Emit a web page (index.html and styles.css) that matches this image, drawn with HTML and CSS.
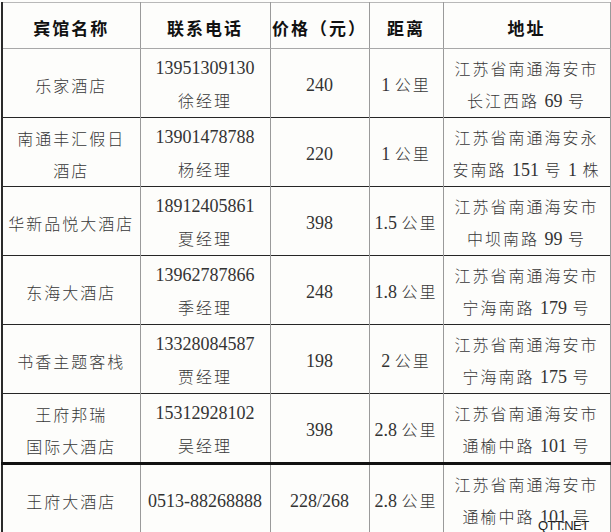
FILE: index.html
```html
<!DOCTYPE html>
<html lang="zh">
<head>
<meta charset="utf-8">
<title>宾馆信息</title>
<link rel="stylesheet" href="styles.css">
</head>
<body>
<div class="page">
<table class="hotels">
  <colgroup>
    <col class="c-name"><col class="c-phone"><col class="c-price"><col class="c-dist"><col class="c-addr">
  </colgroup>
  <thead>
    <tr>
      <th>宾馆名称</th>
      <th>联系电话</th>
      <th>价格（元）</th>
      <th>距离</th>
      <th>地址</th>
    </tr>
  </thead>
  <tbody>
    <tr>
      <td class="cn">乐家酒店</td>
      <td><span class="num">13951309130</span><br><span class="cn">徐经理</span></td>
      <td class="num">240</td>
      <td><span class="num">1</span> <span class="cn">公里</span></td>
      <td class="cn">江苏省南通海安市<br>长江西路 <span class="num">69</span> 号</td>
    </tr>
    <tr>
      <td class="cn">南通丰汇假日<br>酒店</td>
      <td><span class="num">13901478788</span><br><span class="cn">杨经理</span></td>
      <td class="num">220</td>
      <td><span class="num">1</span> <span class="cn">公里</span></td>
      <td class="cn">江苏省南通海安永<br>安南路 <span class="num">151</span> 号 <span class="num">1</span> 株</td>
    </tr>
    <tr>
      <td class="cn">华新品悦大酒店</td>
      <td><span class="num">18912405861</span><br><span class="cn">夏经理</span></td>
      <td class="num">398</td>
      <td><span class="num">1.5</span> <span class="cn">公里</span></td>
      <td class="cn">江苏省南通海安市<br>中坝南路 <span class="num">99</span> 号</td>
    </tr>
    <tr>
      <td class="cn">东海大酒店</td>
      <td><span class="num">13962787866</span><br><span class="cn">季经理</span></td>
      <td class="num">248</td>
      <td><span class="num">1.8</span> <span class="cn">公里</span></td>
      <td class="cn">江苏省南通海安市<br>宁海南路 <span class="num">179</span> 号</td>
    </tr>
    <tr>
      <td class="cn">书香主题客栈</td>
      <td><span class="num">13328084587</span><br><span class="cn">贾经理</span></td>
      <td class="num">198</td>
      <td><span class="num">2</span> <span class="cn">公里</span></td>
      <td class="cn">江苏省南通海安市<br>宁海南路 <span class="num">175</span> 号</td>
    </tr>
    <tr class="sep">
      <td class="cn">王府邦瑞<br>国际大酒店</td>
      <td><span class="num">15312928102</span><br><span class="cn">吴经理</span></td>
      <td class="num">398</td>
      <td><span class="num">2.8</span> <span class="cn">公里</span></td>
      <td class="cn">江苏省南通海安市<br>通榆中路 <span class="num">101</span> 号</td>
    </tr>
    <tr class="last">
      <td class="cn">王府大酒店</td>
      <td class="num">0513-88268888</td>
      <td class="num">228/268</td>
      <td><span class="num">2.8</span> <span class="cn">公里</span></td>
      <td class="cn">江苏省南通海安市<br>通榆中路 <span class="num">101</span> 号</td>
    </tr>
  </tbody>
</table>
<div class="watermark">QTT.NET</div>
</div>
</body>
</html>
```
FILE: styles.css
```css
html, body {
  margin: 0;
  padding: 0;
  background: #fdfdfb;
}
.page {
  position: relative;
  width: 611px;
  height: 532px;
  overflow: hidden;
  padding-top: 2px;
  padding-left: 1px;
  box-sizing: border-box;
}
.hotels {
  border-collapse: collapse;
  table-layout: fixed;
  width: 608px;
  color: #3a3a3a;
  font-family: "Liberation Serif", "Noto Sans CJK SC", serif;
  border-top: 1px solid #b8b8b8;
  border-left: 2px solid #2a2a2a;
  border-right: 1px solid #9a9a9a;
  border-bottom: 1px solid #9a9a9a;
}
.c-name { width: 138px; }
.c-phone { width: 130px; }
.c-price { width: 99px; }
.c-dist { width: 74px; }
.c-addr { width: 167px; }

.hotels th {
  height: 41px;
  padding: 4px 0 0 0;
  font-family: "Noto Sans CJK SC", sans-serif;
  font-weight: bold;
  font-size: 17px;
  letter-spacing: 2px;
  color: #111;
  border-left: 1px solid #9a9a9a;
  border-right: 1px solid #9a9a9a;
  border-bottom: 1px solid #a8a8a8;
  text-align: center;
  vertical-align: middle;
  line-height: 24px;
}
.hotels td {
  height: 65px;
  padding: 3px 0 0 0;
  border-left: 1px solid #9a9a9a;
  border-right: 1px solid #9a9a9a;
  text-align: center;
  vertical-align: middle;
  line-height: 32px;
  font-size: 18px;
  white-space: nowrap;
}
.hotels tbody tr {
  border-bottom: 1px solid #262626;
}
.hotels tbody tr.sep {
  border-bottom: 3px solid #111;
}
.hotels tbody tr.last {
  border-bottom: 1px solid #9a9a9a;
}
.hotels .cn {
  font-family: "Noto Sans CJK SC", sans-serif;
  font-size: 16px;
  font-weight: 300;
  letter-spacing: 2px;
  color: #383838;
}
.hotels .num {
  font-family: "Liberation Serif", serif;
  font-size: 18px;
  letter-spacing: 0;
  font-weight: normal;
  color: #333;
}
.watermark {
  position: absolute;
  left: 538px;
  top: 518px;
  font-family: "Liberation Sans", sans-serif;
  font-size: 13px;
  color: #222;
  text-shadow: 0 0 2px #fff, 0 0 2px #fff;
  letter-spacing: -0.5px;
}
```
